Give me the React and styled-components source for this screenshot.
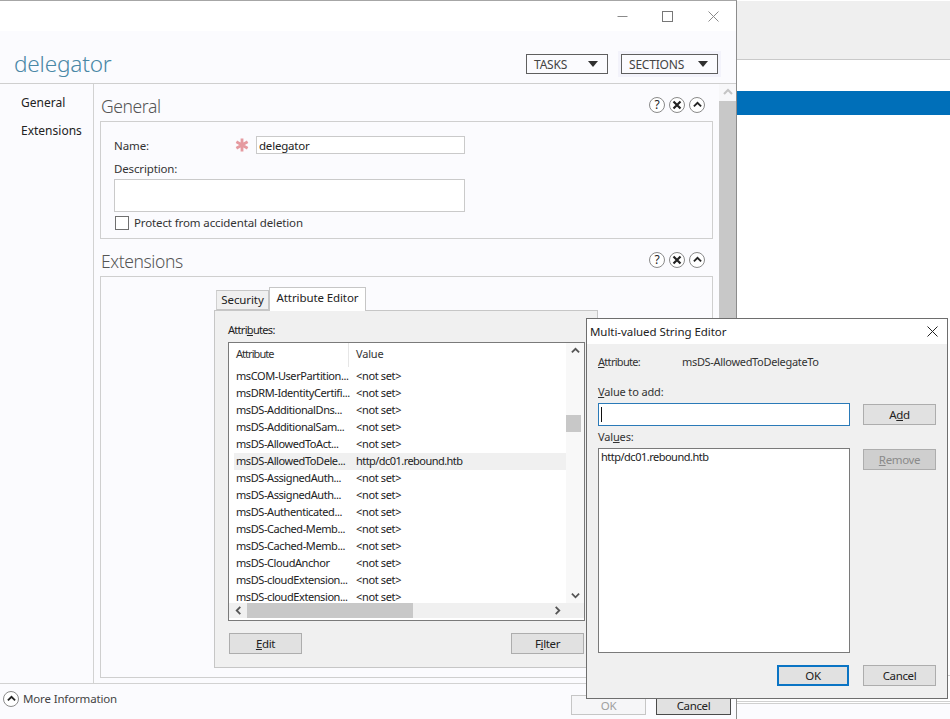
import React from "react";
import styled, { createGlobalStyle } from "styled-components";

const Global = createGlobalStyle`
  html, body { margin: 0; padding: 0; background: #fff; }
  #root { width: 950px; height: 719px; overflow: hidden; }
  * { box-sizing: border-box; }
`;

const UI = `"Noto Sans", "Open Sans", sans-serif`;

const Page = styled.div`
  position: relative;
  display: flex;
  width: 950px;
  height: 719px;
  overflow: hidden;
  font-family: ${UI};
  font-size: 12px;
  color: #333;
`;

/* ---------- main window ---------- */
const Win = styled.div`
  width: 737px;
  flex: none;
  display: flex;
  flex-direction: column;
  background: #fbfbfe;
  border-top: 1px solid #a6a6a6;
  border-right: 1px solid #8c8c8c;
`;
const TitleBar = styled.div`
  height: 30px;
  flex: none;
  background: #fff;
  display: flex;
  justify-content: flex-end;
`;
const Ctl = styled.div`
  width: ${p => p.$w || 45}px;
  display: flex;
  align-items: center;
  justify-content: center;
  color: #777;
`;
const Header = styled.div`
  height: 53px;
  flex: none;
  display: flex;
  align-items: flex-start;
  padding: 23px 18px 0 14px;
  border-bottom: 1px solid #cfcfcf;
`;
const ObjTitle = styled.div`
  flex: 1;
  font-size: 22.6px;
  line-height: 20px;
  font-weight: 300;
  color: #4a88a6;
  letter-spacing: -0.2px;
`;
const Drop = styled.div`
  height: 20px;
  width: ${p => p.$w}px;
  margin-left: ${p => p.$ml || 0}px;
  border: 1px solid #5f5f5f;
  background: #fbfbfe;
  display: flex;
  align-items: center;
  justify-content: space-between;
  padding: 0 9px 0 7px;
  font-size: 12px;
  letter-spacing: -0.2px;
  color: #444;
  ${p => (p.$halo ? "box-shadow: 0 0 0 3px #f3f3fb;" : "")}
`;
const Caret = styled.span`
  width: 0;
  height: 0;
  border-left: 5px solid transparent;
  border-right: 5px solid transparent;
  border-top: 6px solid #2f2f2f;
`;
const Body = styled.div`
  flex: 1;
  min-height: 0;
  display: flex;
  border-bottom: 1px solid #d2d2d2;
`;
const Nav = styled.div`
  width: 94px;
  flex: none;
  border-right: 1px solid #d2d2d2;
  padding: 10px 0 0 21px;
  display: flex;
  flex-direction: column;
  gap: 11px;
`;
const NavItem = styled.div`
  font-size: 12px;
  line-height: 17px;
  color: #222;
`;
const Content = styled.div`
  flex: 1;
  min-width: 0;
  padding: 0 6px;
`;
const Heading = styled.div`
  height: 37px;
  display: flex;
  align-items: flex-start;
  justify-content: space-between;
  padding-right: 8px;
`;
const HeadText = styled.div`
  font-size: 17.5px;
  font-weight: 300;
  line-height: 24px;
  letter-spacing: -0.4px;
  margin: 10px 0 0 1px;
  color: #555;
`;
const HeadBtns = styled.div`
  display: flex;
  gap: 4px;
  padding-top: 13px;
`;
const Round = styled.span`
  width: 16px;
  height: 16px;
  border-radius: 50%;
  border: 1px solid #8a8a8a;
  background: #fff;
  display: flex;
  align-items: center;
  justify-content: center;
  font-size: 12px;
  line-height: 14px;
  color: #222;
`;
const Box = styled.div`
  height: ${p => p.$h}px;
  border: 1px solid #cfcfcf;
  background: #fbfbfe;
  padding: ${p => p.$pad};
`;
const NameRow = styled.div`
  display: flex;
  align-items: center;
  height: 18px;
`;
const Label = styled.label`
  width: 121px;
  font-size: 11.5px;
  letter-spacing: -0.1px;
  padding-top: 1px;
  color: #333;
`;
const Star = styled.span`
  width: 21px;
  display: flex;
`;
const TextField = styled.div`
  width: ${p => p.$w}px;
  height: ${p => p.$h}px;
  border: 1px solid #cacaca;
  background: #fff;
  padding: 1px 2px 0;
  font-size: 11.5px;
  line-height: 16px;
  letter-spacing: -0.2px;
  color: #222;
`;
const DescLabel = styled.div`
  font-size: 11.5px;
  line-height: 16px;
  letter-spacing: -0.15px;
  margin: 7px 0 2px;
  color: #333;
`;
const CheckRow = styled.div`
  display: flex;
  align-items: center;
  gap: 5px;
  margin: 4px 0 0 1px;
  font-size: 11.5px;
  line-height: 14px;
  letter-spacing: -0.12px;
  color: #333;
`;
const Check = styled.span`
  width: 14px;
  height: 14px;
  border: 1px solid #6f6f6f;
  background: #fff;
`;
const Tabs = styled.div`
  display: flex;
  align-items: flex-end;
  height: 23px;
  margin-left: 115px;
`;
const Tab = styled.div`
  width: ${p => p.$w}px;
  height: ${p => (p.$on ? 24 : 20)}px;
  border: 1px solid #c6c6c6;
  border-bottom: ${p => (p.$on ? "none" : "1px solid #c6c6c6")};
  border-left: ${p => (p.$on ? "1px solid #c6c6c6" : "1px solid #d0d0d0")};
  background: ${p => (p.$on ? "#fff" : "#f0f0f0")};
  font-size: 11.5px;
  line-height: ${p => (p.$on ? 20 : 18)}px;
  letter-spacing: -0.1px;
  text-align: center;
  color: #222;
  position: relative;
  z-index: ${p => (p.$on ? 1 : 0)};
  margin-bottom: ${p => (p.$on ? -1 : 0)}px;
`;
const Panel = styled.div`
  width: 384px;
  height: 358px;
  margin-left: 113px;
  border: 1px solid #c6c6c6;
  background: #f0f0f0;
  padding: 11px 13px 0;
`;
const CapLabel = styled.div`
  font-size: 11px;
  line-height: 16px;
  letter-spacing: -0.7px;
  color: #222;
`;
const List = styled.div`
  width: 357px;
  height: 279px;
  margin-top: 4px;
  border: 1px solid #7a7a7a;
  background: #fff;
  display: flex;
  flex-direction: column;
`;
const ListTop = styled.div`
  height: 260px;
  flex: none;
  display: flex;
`;
const Cols = styled.div`
  flex: 1;
  min-width: 0;
  overflow: hidden;
  padding-left: 5px;
`;
const HeadRow = styled.div`
  height: 25px;
  display: flex;
  align-items: flex-start;
  font-size: 11px;
  color: #333;
`;
const HeadCell = styled.div`
  padding-left: 2px;
  width: ${p => p.$w}px;
  height: 24px;
  line-height: 22px;
  letter-spacing: ${p => (p.$tight ? "-0.95px" : "-0.2px")};
  border-right: ${p => (p.$sep ? "1px solid #e6e6e6" : "none")};
  margin-right: ${p => (p.$sep ? 5 : 0)}px;
`;
const Row = styled.div`
  height: 17px;
  display: flex;
  align-items: flex-start;
  line-height: 14px;
  background: ${p => (p.$sel ? "#f0f0f0" : "transparent")};
  font-size: 11px;
  letter-spacing: -0.42px;
  color: #222;
  white-space: nowrap;
  &:last-child { height: 15px; }
`;
const AttrCell = styled.div`
  width: 122px;
  flex: none;
  padding: 1px 0 0 2px;
`;
const ValueCell = styled.span`
  padding-top: 1px;
  letter-spacing: ${p => (p.$sel ? "-0.55px" : "-0.35px")};
`;
const VScroll = styled.div`
  width: 18px;
  flex: none;
  background: #f8f8f8;
  position: relative;
  display: flex;
  flex-direction: column;
  justify-content: space-between;
  align-items: center;
  padding: 4px 0 3px;
`;
const VThumb = styled.span`
  position: absolute;
  left: 0;
  top: 72px;
  width: 15px;
  height: 17px;
  background: #c8c8c8;
`;
const HScroll = styled.div`
  height: 15px;
  flex: none;
  background: #f0f0f0;
  display: flex;
  align-items: center;
  padding: 0 22px 0 5px;
`;
const HThumb = styled.span`
  width: 166px;
  height: 15px;
  background: #c8c8c8;
  margin-left: 4px;
  margin-right: auto;
`;
const BtnRow = styled.div`
  display: flex;
  justify-content: space-between;
  margin-top: 12px;
  padding-left: 1px;
  width: 356px;
`;
const Btn = styled.div`
  width: ${p => p.$w || 73}px;
  height: ${p => p.$h || 21}px;
  background: ${p => (p.$ghost ? "#f6f6f8" : p.$dim ? "#cfcfcf" : "#e1e1e1")};
  border: ${p =>
    p.$focus ? "2px solid #0a74c4" : p.$dark ? "1px solid #4a4a4a" : p.$ghost ? "1px solid #c6c6c6" : "1px solid #adadad"};
  display: flex;
  align-items: center;
  justify-content: center;
  font-size: 11.5px;
  letter-spacing: -0.35px;
  color: ${p => (p.$ghost ? "#a0a0a0" : p.$dim ? "#8a8a8a" : "#222")};
`;
const VScrollOuter = styled.div`
  width: 17px;
  flex: none;
  display: flex;
  flex-direction: column;
  background: #c8c8c8;
`;
const UpBtn = styled.div`
  height: 17px;
  background: #f7f7f9;
  display: flex;
  align-items: center;
  justify-content: center;
`;
const Footer = styled.div`
  height: 35px;
  flex: none;
  display: flex;
  align-items: flex-start;
  padding: 7px 5px 0 3px;
`;
const More = styled.div`
  flex: 1;
  display: flex;
  align-items: center;
  gap: 4px;
  font-size: 11.5px;
  line-height: 16px;
  letter-spacing: -0.15px;
  color: #444;
`;
const FootBtns = styled.div`
  display: flex;
  gap: 10px;
  padding-top: 4px;
`;

/* ---------- backdrop ---------- */
const Back = styled.div`
  flex: 1;
  display: flex;
  flex-direction: column;
  background: #fff;
`;
const Band = styled.div`
  height: 59px;
  flex: none;
  margin-top: 1px;
  background: #efefef;
  border-bottom: 1px solid #c9c9c9;
`;
const Blue = styled.div`
  height: 24px;
  flex: none;
  margin-top: 31px;
  background: #006fb9;
`;
const Rule = styled.div`
  height: 1px;
  flex: none;
  margin-top: ${p => p.$mt}px;
  background: #d0d0d0;
`;
const BackFoot = styled.div`
  flex: 1;
  background: #fbfbfe;
`;

/* ---------- dialog ---------- */
const Dialog = styled.div`
  position: absolute;
  left: 586px;
  top: 318px;
  width: 362px;
  height: 381px;
  border: 1px solid #6e6e6e;
  background: #f0f0f0;
  display: flex;
  flex-direction: column;
`;
const DlgTitle = styled.div`
  height: 25px;
  flex: none;
  background: #fff;
  display: flex;
  align-items: center;
  justify-content: space-between;
  padding: 0 9px 1px 3px;
  font-size: 11.5px;
  letter-spacing: -0.06px;
  color: #222;
`;
const DlgBody = styled.div`
  flex: 1;
  display: grid;
  grid-template-columns: 252px 73px;
  grid-template-rows: auto auto 23px auto 205px auto;
  column-gap: 13px;
  padding: 10px 11px 0;
  align-content: start;
  align-items: start;
`;
const DlgAttr = styled.div`
  grid-column: 1 / -1;
  display: flex;
  font-size: 11px;
  line-height: 16px;
  letter-spacing: -0.32px;
  color: #333;
`;
const DlgAttrKey = styled.span`
  width: 84px;
  letter-spacing: -0.7px;
`;
const DlgLabel = styled.div`
  grid-column: 1 / -1;
  font-size: 11px;
  line-height: 16px;
  letter-spacing: -0.15px;
  margin-top: ${p => p.$mt}px;
  margin-bottom: 3px;
  color: #333;
`;
const DlgInput = styled.div`
  height: 23px;
  border: 1px solid #2a7ab8;
  background: #fff;
  padding: 3px 2px;
  display: flex;
`;
const CaretBar = styled.span`
  width: 1px;
  height: 15px;
  background: #111;
`;
const DlgList = styled.div`
  height: 205px;
  border: 1px solid #7a7a7a;
  background: #fff;
  padding: 1px 2px;
  font-size: 11px;
  line-height: 14px;
  letter-spacing: -0.5px;
  color: #222;
`;
const SideBtn = styled(Btn)`
  margin-top: 1px;
`;
const DlgFoot = styled.div`
  grid-column: 1 / -1;
  display: flex;
  justify-content: flex-end;
  gap: 14px;
  margin-top: 12px;
`;

/* ---------- icons ---------- */
const Chevron = ({ dir = "up", color = "#555", w = 9 }) => {
  const d = { up: "M1 6 L5 2 L9 6", down: "M1 3 L5 7 L9 3", left: "M7 1 L3 5 L7 9", right: "M3 1 L7 5 L3 9" }[dir];
  return (
    <svg width={w} height={w} viewBox="0 0 10 10" fill="none">
      <path d={d} stroke={color} strokeWidth="2" />
    </svg>
  );
};
const MinIcon = () => (
  <svg width="11" height="11" viewBox="0 0 11 11"><path d="M0.5 5.5 H10.5" stroke="#8a8a8a" strokeWidth="1" /></svg>
);
const MaxIcon = () => (
  <svg width="11" height="11" viewBox="0 0 11 11"><rect x="0.5" y="0.5" width="10" height="10" fill="none" stroke="#777" /></svg>
);
const CloseIcon = ({ color = "#8a8a8a", s = 11 }) => (
  <svg width={s} height={s} viewBox="0 0 11 11"><path d="M0.5 0.5 L10.5 10.5 M10.5 0.5 L0.5 10.5" stroke={color} strokeWidth="1" /></svg>
);
const XBold = () => (
  <svg width="10" height="10" viewBox="0 0 10 10"><path d="M1.5 1.5 L8.5 8.5 M8.5 1.5 L1.5 8.5" stroke="#222" strokeWidth="2.2" /></svg>
);
const Asterisk = () => (
  <svg width="14" height="14" viewBox="0 0 14 14">
    <path d="M7 0.5 V13.5 M1.4 3.8 L12.6 10.2 M12.6 3.8 L1.4 10.2" stroke="#e59aa0" strokeWidth="2.8" />
  </svg>
);
const SectionButtons = () => (
  <HeadBtns>
    <Round>?</Round>
    <Round><XBold /></Round>
    <Round><Chevron dir="up" color="#222" /></Round>
  </HeadBtns>
);

const rows = [
  ["msCOM-UserPartition...", "<not set>"],
  ["msDRM-IdentityCertifi...", "<not set>"],
  ["msDS-AdditionalDns...", "<not set>"],
  ["msDS-AdditionalSam...", "<not set>"],
  ["msDS-AllowedToAct...", "<not set>"],
  ["msDS-AllowedToDele...", "http/dc01.rebound.htb", true],
  ["msDS-AssignedAuth...", "<not set>"],
  ["msDS-AssignedAuth...", "<not set>"],
  ["msDS-Authenticated...", "<not set>"],
  ["msDS-Cached-Memb...", "<not set>"],
  ["msDS-Cached-Memb...", "<not set>"],
  ["msDS-CloudAnchor", "<not set>"],
  ["msDS-cloudExtension...", "<not set>"],
  ["msDS-cloudExtension...", "<not set>"],
];

export default function App() {
  return (
    <Page>
      <Global />
      <Win>
        <TitleBar>
          <Ctl><MinIcon /></Ctl>
          <Ctl><MaxIcon /></Ctl>
          <Ctl $w={46}><CloseIcon /></Ctl>
        </TitleBar>
        <Header>
          <ObjTitle>delegator</ObjTitle>
          <Drop $w={82}>TASKS<Caret /></Drop>
          <Drop $w={97} $ml={13} $halo>SECTIONS<Caret /></Drop>
        </Header>
        <Body>
          <Nav>
            <NavItem>General</NavItem>
            <NavItem>Extensions</NavItem>
          </Nav>
          <Content>
            <Heading>
              <HeadText>General</HeadText>
              <SectionButtons />
            </Heading>
            <Box $h={118} $pad="14px 13px 0">
              <NameRow>
                <Label>Name:</Label>
                <Star><Asterisk /></Star>
                <TextField $w={209} $h={18}>delegator</TextField>
              </NameRow>
              <DescLabel>Description:</DescLabel>
              <TextField $w={351} $h={33} />
              <CheckRow><Check />Protect from accidental deletion</CheckRow>
            </Box>
            <Heading>
              <HeadText>Extensions</HeadText>
              <SectionButtons />
            </Heading>
            <Box $h={402} $pad="10px 0 0">
              <Tabs>
                <Tab $w={53}>Security</Tab>
                <Tab $w={97} $on>Attribute Editor</Tab>
              </Tabs>
              <Panel>
                <CapLabel>Attri<u>b</u>utes:</CapLabel>
                <List>
                  <ListTop>
                    <Cols>
                      <HeadRow>
                        <HeadCell $w={115} $sep $tight>Attribute</HeadCell>
                        <HeadCell $w={100}>Value</HeadCell>
                      </HeadRow>
                      {rows.map(([a, v, sel], i) => (
                        <Row key={i} $sel={sel}>
                          <AttrCell>{a}</AttrCell>
                          <ValueCell $sel={sel}>{v}</ValueCell>
                        </Row>
                      ))}
                    </Cols>
                    <VScroll>
                      <Chevron dir="up" />
                      <VThumb />
                      <Chevron dir="down" />
                    </VScroll>
                  </ListTop>
                  <HScroll>
                    <Chevron dir="left" />
                    <HThumb />
                    <Chevron dir="right" />
                  </HScroll>
                </List>
                <BtnRow>
                  <Btn><span><u>E</u>dit</span></Btn>
                  <Btn><span>F<u>i</u>lter</span></Btn>
                </BtnRow>
              </Panel>
            </Box>
          </Content>
          <VScrollOuter>
            <UpBtn><Chevron dir="up" color="#c4c4c4" w={10} /></UpBtn>
          </VScrollOuter>
        </Body>
        <Footer>
          <More>
            <Round><Chevron dir="up" color="#222" /></Round>
            More Information
          </More>
          <FootBtns>
            <Btn $w={75} $h={20} $ghost>OK</Btn>
            <Btn $w={75} $h={20} $dark>Cancel</Btn>
          </FootBtns>
        </Footer>
      </Win>
      <Back>
        <Band />
        <Blue />
        <Rule $mt={560} />
        <Rule $mt={25} />
        <Rule $mt={1} />
        <BackFoot />
      </Back>
      <Dialog>
        <DlgTitle>
          Multi-valued String Editor
          <CloseIcon color="#222" s={11} />
        </DlgTitle>
        <DlgBody>
          <DlgAttr>
            <DlgAttrKey><u>A</u>ttribute:</DlgAttrKey>
            msDS-AllowedToDelegateTo
          </DlgAttr>
          <DlgLabel $mt={14}><u>V</u>alue to add:</DlgLabel>
          <DlgInput><CaretBar /></DlgInput>
          <SideBtn><span>A<u>d</u>d</span></SideBtn>
          <DlgLabel $mt={3}>Val<u>u</u>es:</DlgLabel>
          <DlgList>http/dc01.rebound.htb</DlgList>
          <SideBtn $dim><span><u>R</u>emove</span></SideBtn>
          <DlgFoot>
            <Btn $w={72} $focus>OK</Btn>
            <Btn>Cancel</Btn>
          </DlgFoot>
        </DlgBody>
      </Dialog>
    </Page>
  );
}
